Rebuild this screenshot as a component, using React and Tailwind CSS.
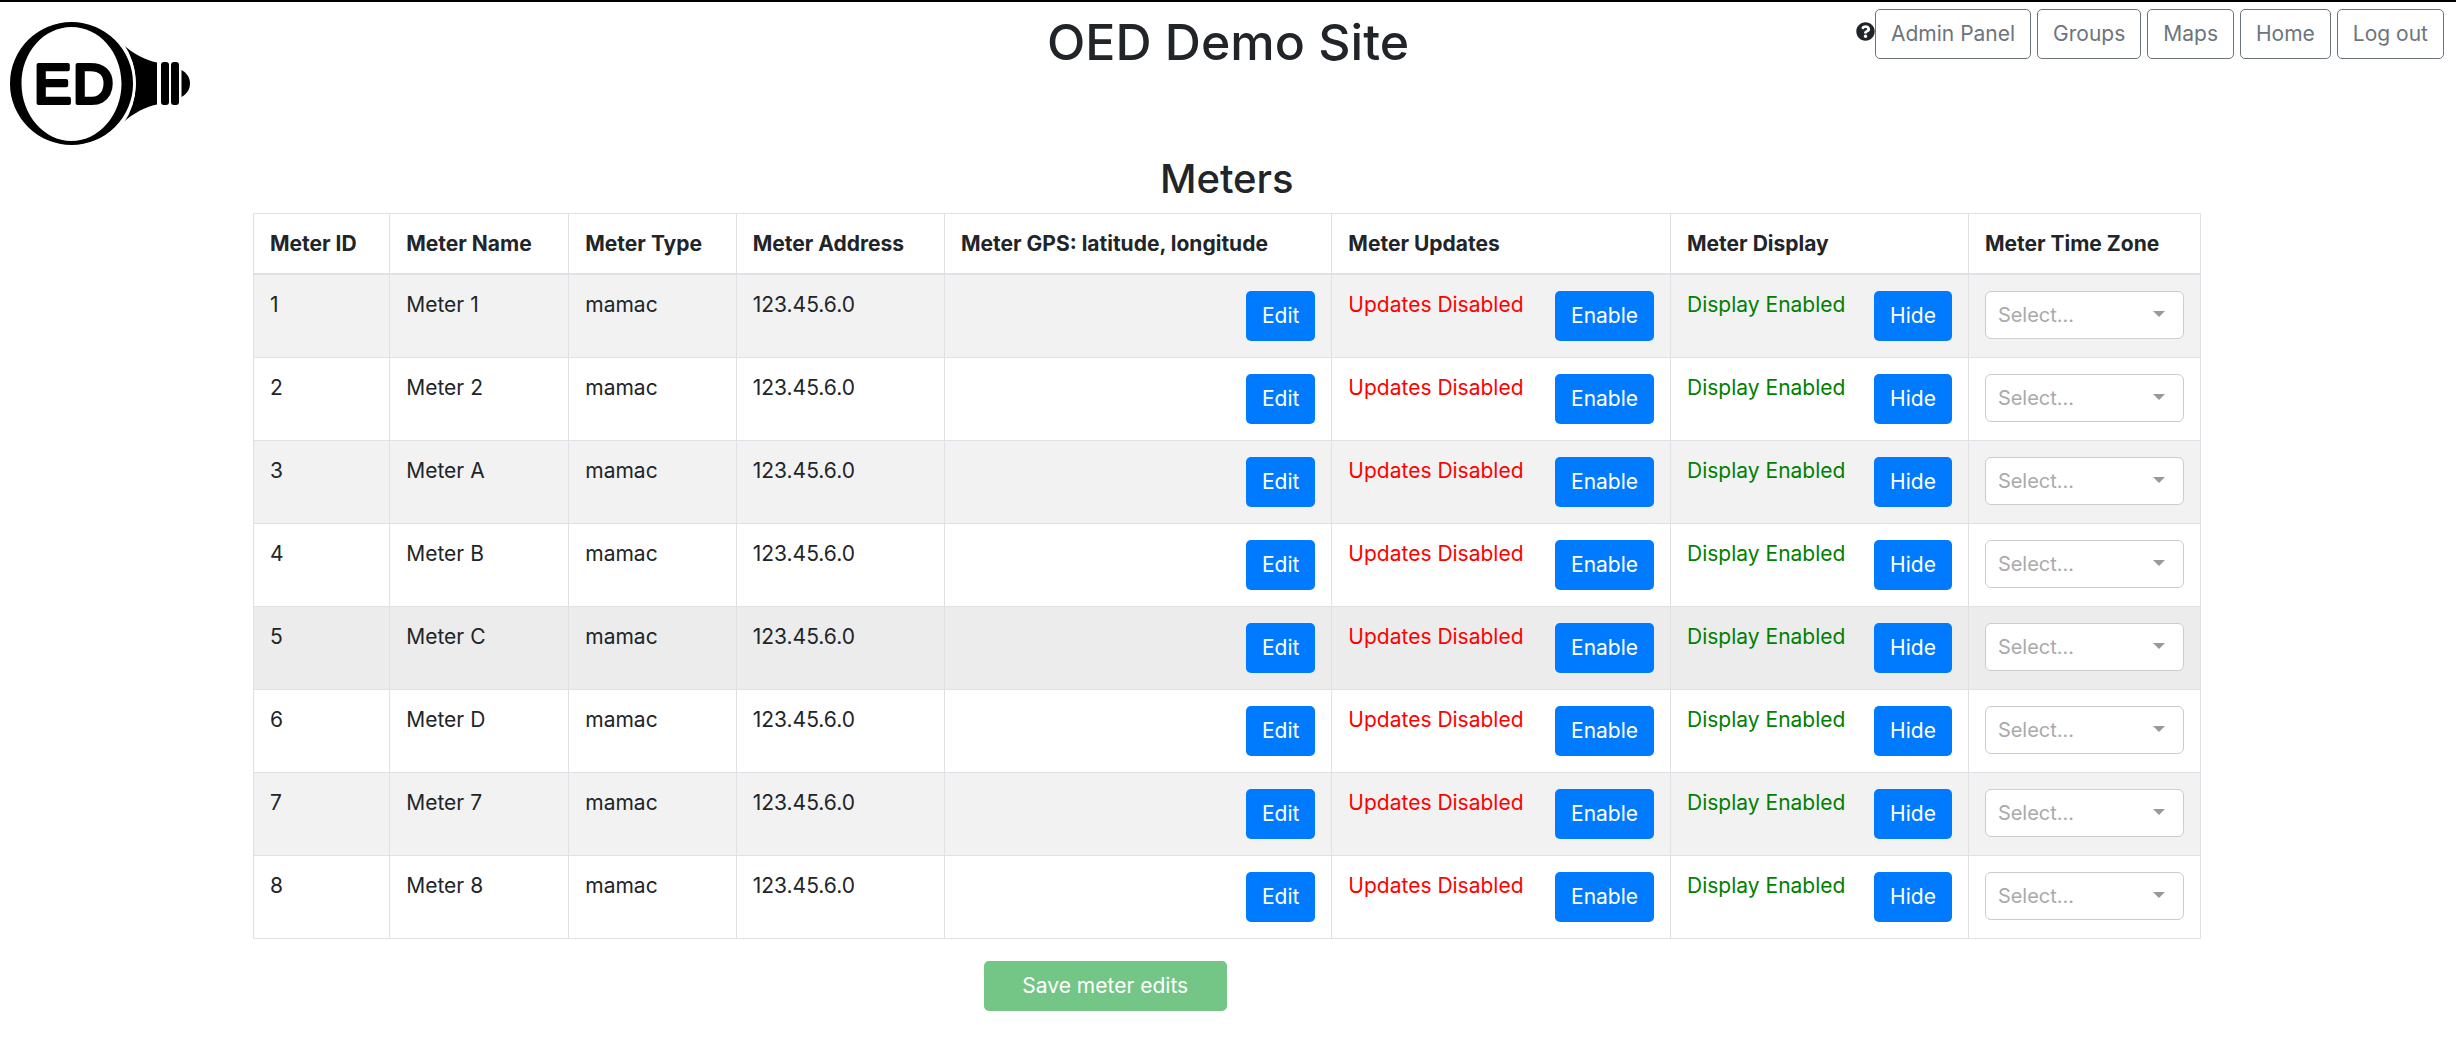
import React from 'react';

const NAV = ['Admin Panel', 'Groups', 'Maps', 'Home', 'Log out'];

const COLUMNS = [
  { label: 'Meter ID', width: 'w-[7%]' },
  { label: 'Meter Name', width: 'w-[9.2%]' },
  { label: 'Meter Type', width: 'w-[8.6%]' },
  { label: 'Meter Address', width: 'w-[10.7%]' },
  { label: 'Meter GPS: latitude, longitude', width: 'w-[19.9%]' },
  { label: 'Meter Updates', width: 'w-[17.4%]' },
  { label: 'Meter Display', width: 'w-[15.3%]' },
  { label: 'Meter Time Zone', width: 'w-[11.9%]' },
];

const METERS = ['Meter 1', 'Meter 2', 'Meter A', 'Meter B', 'Meter C', 'Meter D', 'Meter 7', 'Meter 8'];

function Logo() {
  return (
    <svg className="block h-[160px] w-[200px]" viewBox="0 0 200 160" role="img" aria-label="OED">
      <path
        fillRule="evenodd"
        d="M71.500 22A61.500 61.500 0 1 1 71.500 145A61.500 61.500 0 1 1 71.500 22ZM71.500 27C44 27 21.500 52 21.500 83.500C21.500 115 44 141 71.500 141C99 141 121.500 115 121.500 83.500C121.500 52 99 27 71.500 27Z"
      />
      <path
        d="M124 45.500C134 54 145 60 157 62.500V104.500C145 107 134 113 123.500 122C140 98 140 69 124 45.500Z"
      />
      <path d="M122 43C139 67 139 100 122 124" fill="none" stroke="#fff" strokeWidth="2" />
      <rect x="161" y="62" width="8" height="43" rx="3" />
      <rect x="171" y="62" width="8" height="43" rx="3" />
      <path d="M181.500 70C187 73 190 78 190 83.500C190 89 187 94 181.500 97Z" />
      <text
        x="34 73"
        y="103"
        fontFamily="'Liberation Sans', Arial, sans-serif"
        fontWeight="400"
        fontSize="56"
        stroke="#000"
        strokeWidth="4"
        strokeLinejoin="round"
      >
        ED
      </text>
    </svg>
  );
}

function HelpIcon() {
  return (
    <svg className="size-[19px]" viewBox="0 0 512 512" fill="#212529" aria-hidden="true">
      <path d="M504 256c0 136.997-111.043 248-248 248S8 392.997 8 256C8 119.083 119.043 8 256 8s248 111.083 248 248zM262.655 90c-54.497 0-89.255 22.957-116.549 63.758-3.536 5.286-2.353 12.415 2.715 16.258l34.699 26.31c5.205 3.947 12.621 3.008 16.665-2.122 17.864-22.658 30.113-35.797 57.303-35.797 20.429 0 45.698 13.148 45.698 32.958 0 14.976-12.363 22.667-32.534 33.976C247.128 238.528 216 254.941 216 296v4c0 6.627 5.373 12 12 12h56c6.627 0 12-5.373 12-12v-1.333c0-28.462 83.186-29.647 83.186-106.667 0-58.002-60.165-102-116.531-102zM256 338c-25.365 0-46 20.635-46 46 0 25.364 20.635 46 46 46s46-20.636 46-46c0-25.365-20.635-46-46-46z" />
    </svg>
  );
}

function BlueButton({ children }) {
  return (
    <button type="button" className="h-[50px] rounded-[5px] bg-[#007bff] px-4 text-white">
      {children}
    </button>
  );
}

function TimeZoneSelect({ meter }) {
  return (
    <div className="relative">
      <select
        aria-label={`Time zone for ${meter}`}
        defaultValue=""
        className="block h-12 w-full appearance-none rounded-[6px] border border-[#ccc] bg-white px-3 text-[20px] text-[#aaa]"
      >
        <option value="">Select...</option>
      </select>
      <svg className="pointer-events-none absolute top-5 right-[19px] h-[6px] w-3" viewBox="0 0 12 6" fill="#999">
        <path d="M0 0H12L6 6Z" />
      </svg>
    </div>
  );
}

export default function App() {
  return (
    <div className="min-h-screen border-t-2 border-black bg-white font-['Inter',sans-serif] text-[21px] leading-7 text-[#212529]">
      <header className="grid h-[150px] grid-cols-[1fr_auto_1fr] items-start">
        <a href="#home" className="-mt-[2px] justify-self-start">
          <Logo />
        </a>
        <h1 className="pt-2 text-[50px] leading-[64px] font-medium">OED Demo Site</h1>
        <nav className="flex items-start justify-end pt-[7px] pr-3">
          <button type="button" aria-label="Help" className="pt-[13px]">
            <HelpIcon />
          </button>
          <div className="flex gap-[6px]">
            {NAV.map((label) => (
              <button
                key={label}
                type="button"
                className="h-[50px] rounded-[5px] border border-[#6c757d] px-[15px] whitespace-nowrap text-[#6c757d]"
              >
                {label}
              </button>
            ))}
          </div>
        </nav>
      </header>

      <main className="pr-[10.4%] pl-[10.3%]">
        <h2 className="pt-px pb-2 text-center text-[40px] leading-[52px] font-medium">Meters</h2>
        <table className="w-full table-fixed border-collapse border border-[#dee2e6]">
          <thead>
            <tr>
              {COLUMNS.map(({ label, width }) => (
                <th
                  key={label}
                  scope="col"
                  className={`${width} border border-b-2 border-[#dee2e6] px-4 pt-4 pb-[15px] text-left font-bold whitespace-nowrap`}
                >
                  {label}
                </th>
              ))}
            </tr>
          </thead>
          <tbody>
            {METERS.map((meter, i) => (
              <tr
                key={meter}
                className={`align-top ${i === 4 ? 'bg-[#ececec]' : i % 2 === 0 ? 'bg-[#f2f2f2]' : 'bg-white'}`}
              >
                <td className="border border-[#dee2e6] p-4">{i + 1}</td>
                <td className="border border-[#dee2e6] p-4">{meter}</td>
                <td className="border border-[#dee2e6] p-4">mamac</td>
                <td className="border border-[#dee2e6] p-4">123.45.6.0</td>
                <td className="border border-[#dee2e6] p-4">
                  <div className="flex justify-end">
                    <BlueButton>Edit</BlueButton>
                  </div>
                </td>
                <td className="border border-[#dee2e6] p-4">
                  <div className="flex items-start justify-between whitespace-nowrap">
                    <span className="text-[#ff0000]">Updates Disabled</span>
                    <BlueButton>Enable</BlueButton>
                  </div>
                </td>
                <td className="border border-[#dee2e6] p-4">
                  <div className="flex items-start justify-between whitespace-nowrap">
                    <span className="text-[#008000]">Display Enabled</span>
                    <BlueButton>Hide</BlueButton>
                  </div>
                </td>
                <td className="border border-[#dee2e6] p-4">
                  <TimeZoneSelect meter={meter} />
                </td>
              </tr>
            ))}
          </tbody>
        </table>
        <div className="flex w-1/2 justify-end pt-[22px]">
          <button type="button" disabled className="h-[50px] w-[243px] rounded-[5px] bg-[#74c686] text-white">
            Save meter edits
          </button>
        </div>
      </main>
    </div>
  );
}
